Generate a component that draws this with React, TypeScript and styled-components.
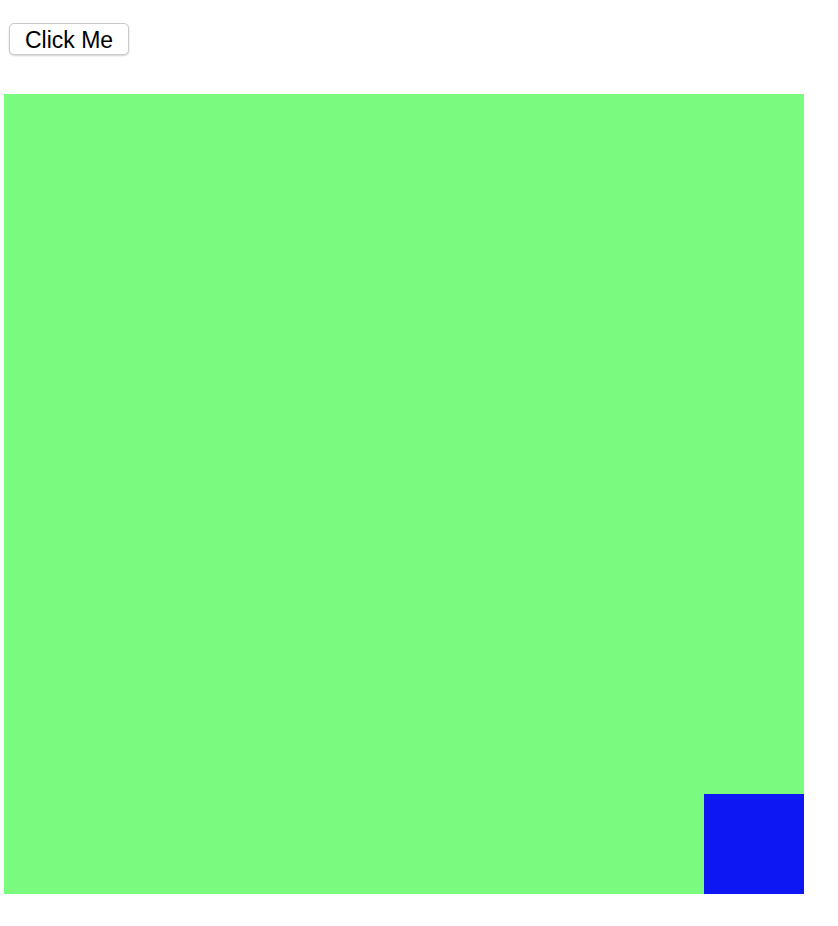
import React from 'react'
import styled, { createGlobalStyle } from "styled-components";

const GlobalStyle = createGlobalStyle`
  html, body {
    margin: 0;
    padding: 0;
    background: #fff;
    font-family: "Liberation Sans", Arial, sans-serif;
  }
`;

const App = () => {
  return (
    <>
      <GlobalStyle />
      <Page>
        <Toolbar>
          <ClickButton type="button">Click Me</ClickButton>
        </Toolbar>
        <Stage>
          <Corner />
        </Stage>
      </Page>
    </>
  )
}

const Page = styled.div`
  display: flex;
  flex-direction: column;
  align-items: flex-start;
`;

const Toolbar = styled.div`
  display: flex;
  padding: 23px 0 0 9px;
`;

const ClickButton = styled.button`
  box-sizing: border-box;
  width: 120px;
  height: 32px;
  padding: 3px 0 0;
  background: #fff;
  color: #000;
  border: 1px solid #c9c9c9;
  border-radius: 5px;
  box-shadow: 0 1px 2px rgba(0, 0, 0, 0.18);
  font-family: "Liberation Sans", Arial, sans-serif;
  font-size: 23px;
  line-height: 1;
  cursor: pointer;
`;

const Stage = styled.div`
  display: flex;
  justify-content: flex-end;
  align-items: flex-end;
  width: 800px;
  height: 800px;
  margin: 39px 0 0 4px;
  background: #7bfa80;
`;

const Corner = styled.div`
  width: 100px;
  height: 100px;
  background: #0c17f4;
`;

export default App
